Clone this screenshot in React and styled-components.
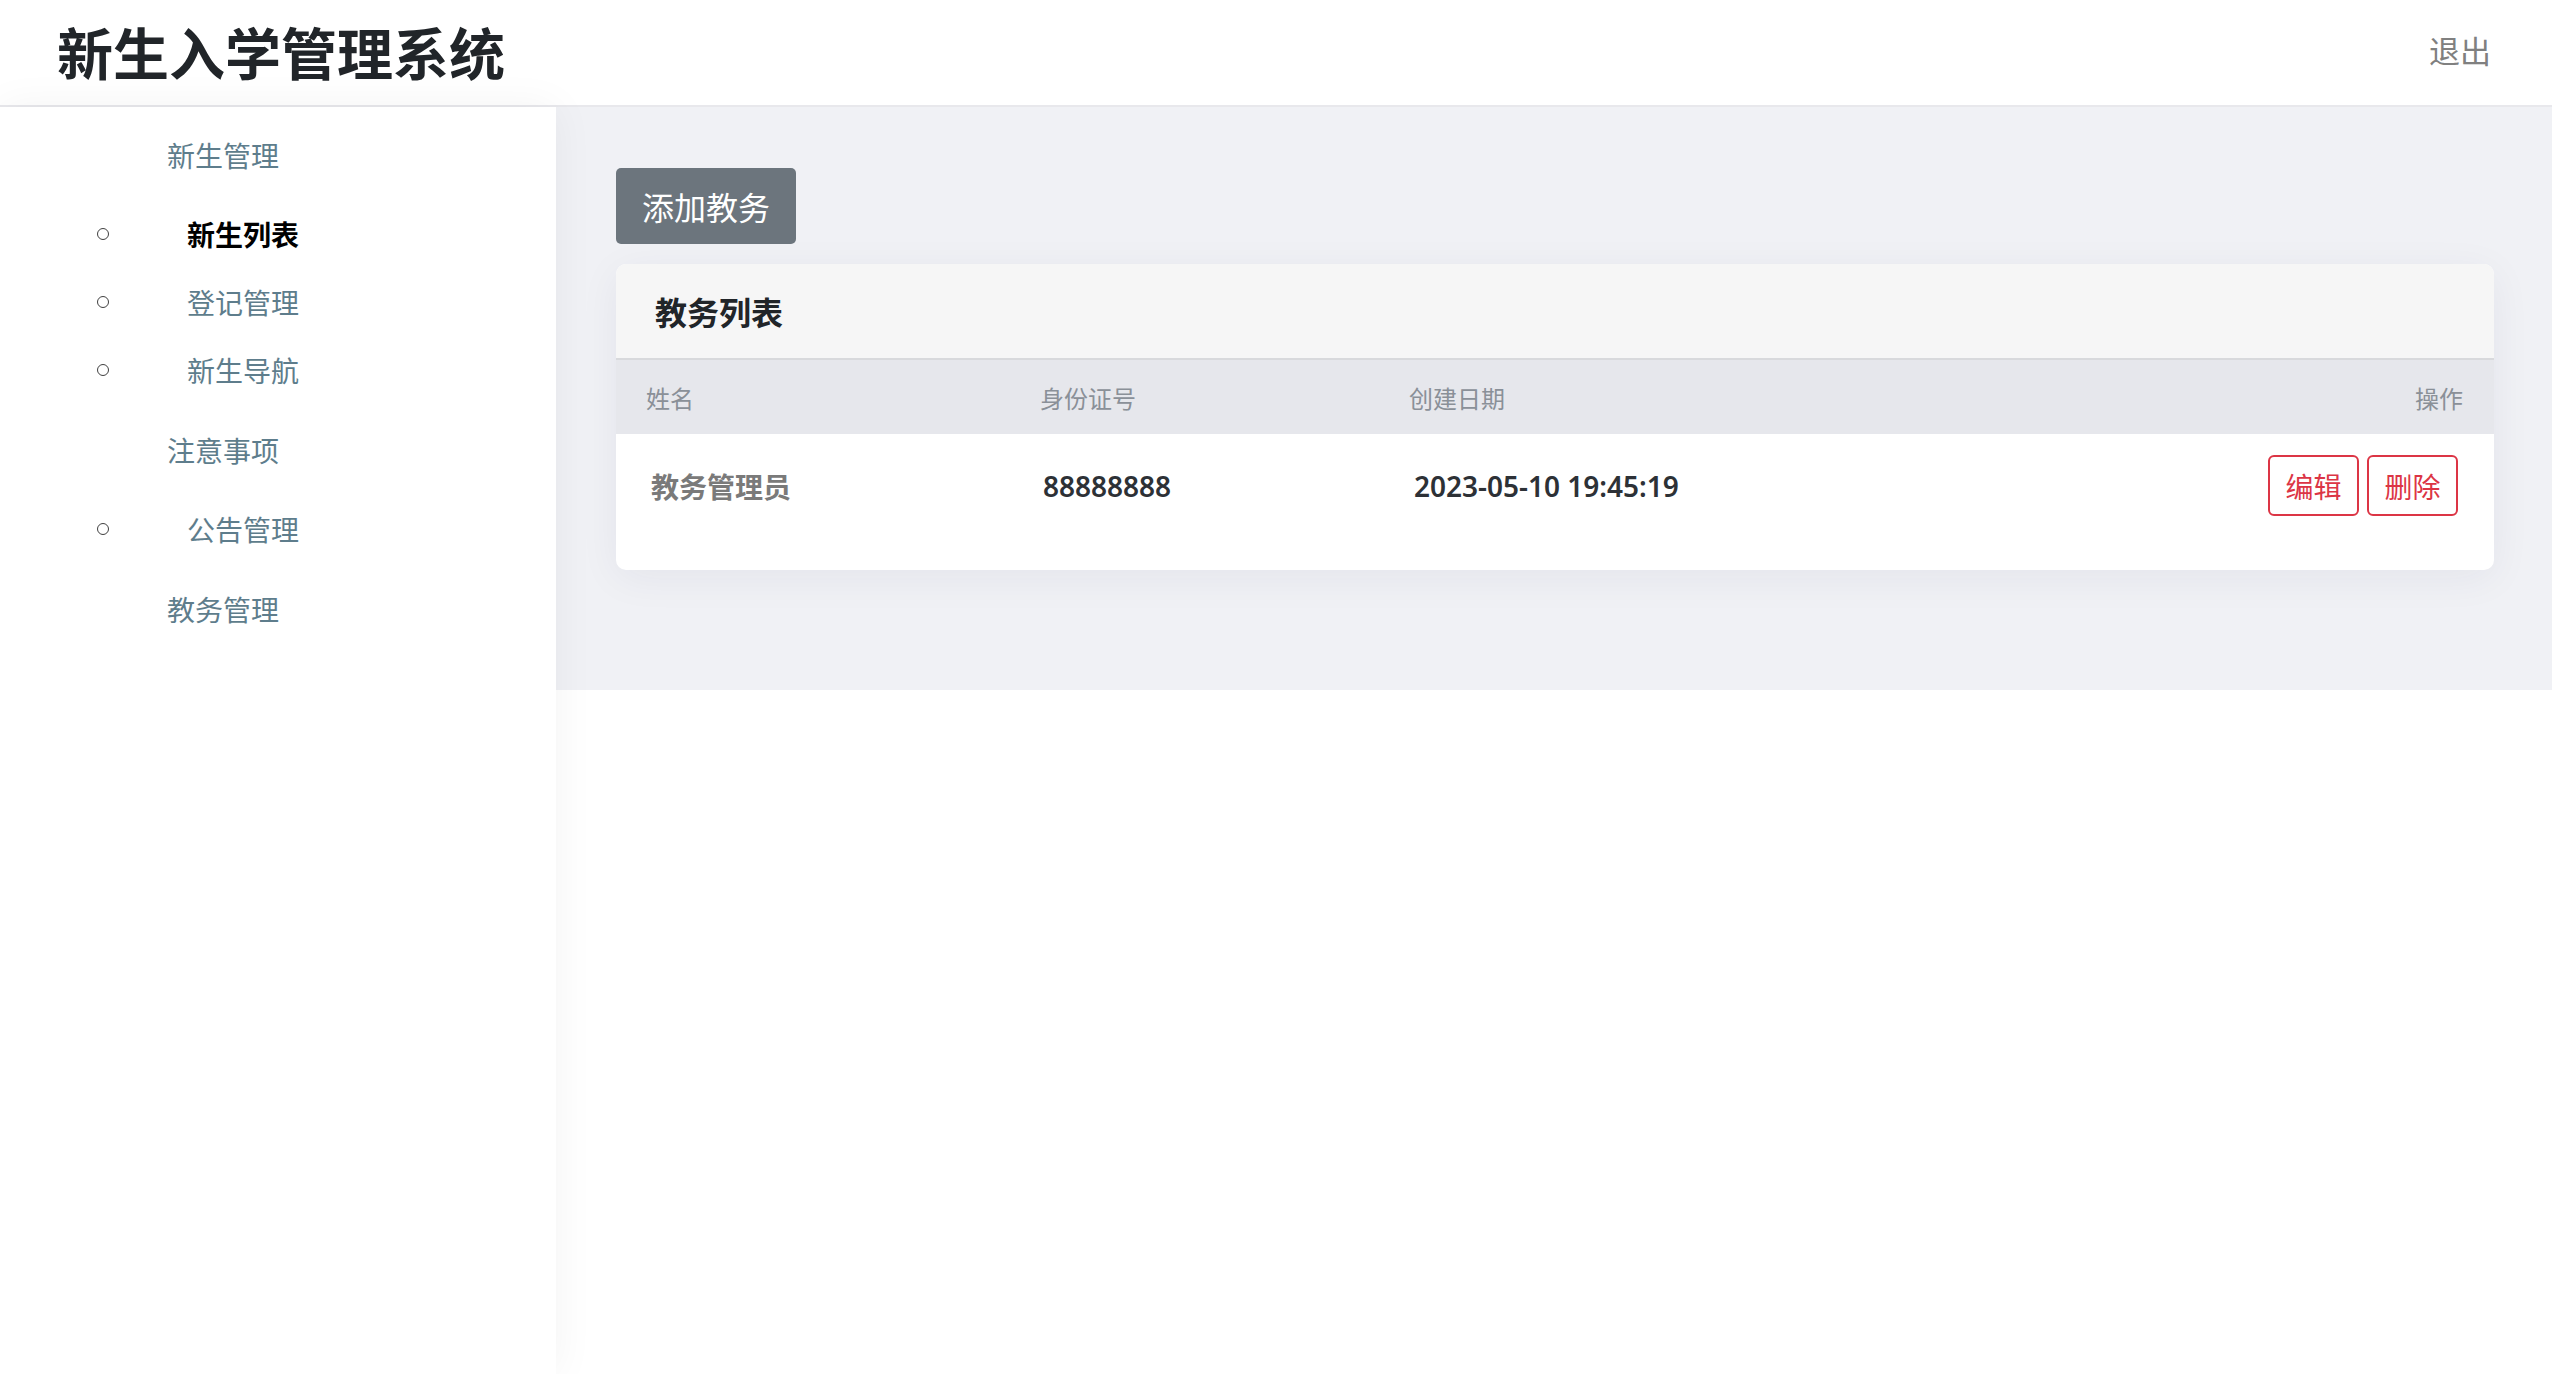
import React from 'react'
import styled, { createGlobalStyle } from 'styled-components'

const GlobalStyle = createGlobalStyle`
  html,
  body {
    margin: 0;
    padding: 0;
    background: #ffffff;
    font-family: 'Noto Sans', 'Noto Sans CJK SC', sans-serif;
  }

  * {
    box-sizing: border-box;
  }
`

const Page = styled.div`
  min-height: 100vh;
  display: flex;
  flex-direction: column;
`

const Header = styled.header`
  height: 107px;
  border-bottom: 2px solid #e8e8ec;
  padding: 0 61px 0 57px;
  display: flex;
  align-items: center;
  justify-content: space-between;
`

const Brand = styled.h1`
  margin: 0;
  font-size: 56px;
  font-weight: 700;
  color: #212529;
  line-height: 1;
`

const Logout = styled.a`
  font-size: 31px;
  color: #808080;
  text-decoration: none;
  cursor: pointer;
  margin-top: -6px;
`

const Body = styled.div`
  flex: 1;
  display: flex;
  align-items: stretch;
`

const Sidebar = styled.nav`
  position: relative;
  z-index: 1;
  width: 556px;
  flex-shrink: 0;
  background: #ffffff;
  box-shadow: 0 0 40px rgba(0, 0, 0, 0.05);
  padding-top: 29px;
`

const Group = styled.div`
  & + & {
    margin-top: 27px;
  }
`

const GroupTitle = styled.div`
  padding-left: 167px;
  height: 40px;
  line-height: 40px;
  font-size: 28px;
  color: #5e7d8c;
  margin-bottom: 24px;
`

const SubList = styled.ul`
  list-style: none;
  margin: 0;
  padding: 0;
`

const SubItem = styled.li`
  height: 68px;
  padding-left: 97px;
  display: flex;
  align-items: center;
  gap: 78px;
  font-size: 28px;
  color: ${({ active }) => (active ? '#000000' : '#5e7d8c')};
  font-weight: ${({ active }) => (active ? 700 : 400)};
`

const Bullet = styled.span`
  width: 12px;
  height: 12px;
  border-radius: 50%;
  border: 1.5px solid #404040;
  flex-shrink: 0;
`

const Main = styled.main`
  flex: 1;
  min-width: 0;
`

const Panel = styled.section`
  background: #f0f1f5;
  padding: 61px 58px 120px 60px;
`

const AddButton = styled.button`
  height: 76px;
  padding: 0 26px;
  border: none;
  border-radius: 5px;
  background: #6c757d;
  color: #ffffff;
  font-family: inherit;
  font-size: 32px;
  cursor: pointer;
`

const Card = styled.div`
  margin-top: 20px;
  background: #ffffff;
  border-radius: 10px;
  overflow: hidden;
  box-shadow: 0 8px 40px rgba(30, 40, 80, 0.06);
  padding-bottom: 33px;
`

const CardHeader = styled.div`
  height: 96px;
  background: #f6f6f6;
  border-bottom: 2px solid #d8d9dc;
  padding-left: 39px;
  display: flex;
  align-items: center;
`

const CardTitle = styled.h5`
  margin: 0;
  font-size: 32px;
  font-weight: 700;
  color: #212529;
`

const Row = styled.div`
  display: grid;
  grid-template-columns: 394px 369px 1fr auto;
  align-items: center;
`

const HeadRow = styled(Row)`
  height: 74px;
  background: #e6e7ec;
  padding-right: 31px;
  font-size: 24px;
  color: #8a9098;
`

const HeadCell = styled.div`
  padding-left: 30px;
`

const DataRow = styled(Row)`
  padding: 21px 36px 21px 0;
`

const DataCell = styled.div`
  padding-left: ${({ indent }) => indent || 34}px;
  font-size: 28px;
  font-weight: ${({ muted }) => (muted ? 700 : 600)};
  color: ${({ muted }) => (muted ? '#7a7a7a' : '#2d3136')};
`

const Actions = styled.div`
  display: flex;
  gap: 8px;
`

const DangerButton = styled.button`
  width: 91px;
  height: 61px;
  border: 2px solid #dc3545;
  border-radius: 6px;
  background: #ffffff;
  color: #dc3545;
  font-family: inherit;
  font-size: 28px;
  padding: 0;
  cursor: pointer;
`

const menu = [
  {
    title: '新生管理',
    items: [
      { label: '新生列表', active: true },
      { label: '登记管理' },
      { label: '新生导航' },
    ],
  },
  { title: '注意事项', items: [{ label: '公告管理' }] },
  { title: '教务管理', items: [] },
]

const staff = [
  { name: '教务管理员', idNo: '88888888', created: '2023-05-10 19:45:19' },
]

const App = () => (
  <Page>
    <GlobalStyle />
    <Header>
      <Brand>新生入学管理系统</Brand>
      <Logout>退出</Logout>
    </Header>
    <Body>
      <Sidebar>
        {menu.map((group) => (
          <Group key={group.title}>
            <GroupTitle>{group.title}</GroupTitle>
            {group.items.length > 0 && (
              <SubList>
                {group.items.map((item) => (
                  <SubItem key={item.label} active={item.active}>
                    <Bullet />
                    {item.label}
                  </SubItem>
                ))}
              </SubList>
            )}
          </Group>
        ))}
      </Sidebar>
      <Main>
        <Panel>
          <AddButton>添加教务</AddButton>
          <Card>
            <CardHeader>
              <CardTitle>教务列表</CardTitle>
            </CardHeader>
            <HeadRow>
              <HeadCell>姓名</HeadCell>
              <HeadCell>身份证号</HeadCell>
              <HeadCell>创建日期</HeadCell>
              <HeadCell>操作</HeadCell>
            </HeadRow>
            {staff.map((row) => (
              <DataRow key={row.idNo}>
                <DataCell muted indent={35}>{row.name}</DataCell>
                <DataCell indent={33}>{row.idNo}</DataCell>
                <DataCell indent={35}>{row.created}</DataCell>
                <Actions>
                  <DangerButton>编辑</DangerButton>
                  <DangerButton>删除</DangerButton>
                </Actions>
              </DataRow>
            ))}
          </Card>
        </Panel>
      </Main>
    </Body>
  </Page>
)

export default App
